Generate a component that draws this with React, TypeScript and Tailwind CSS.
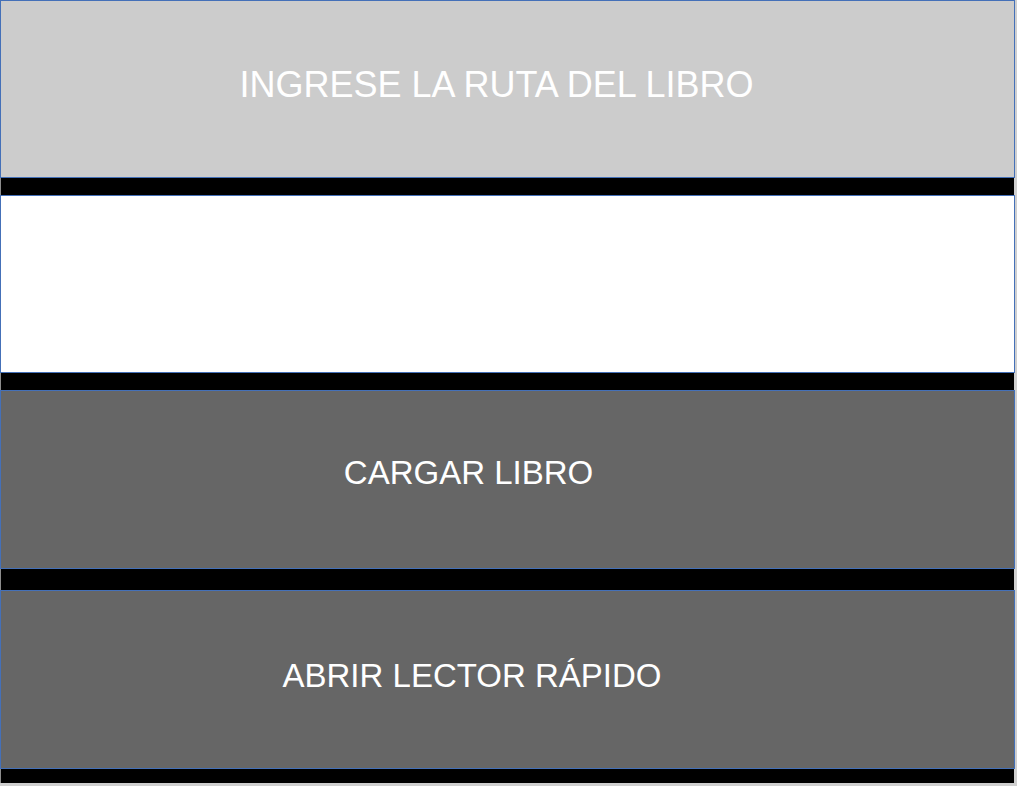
const font = { fontFamily: '"Liberation Sans", Arial, sans-serif' };

function Bar({ h }: { h: string }) {
  return <div className={`${h} w-[1014px] bg-black border-l border-[#8c8c8c]`} />;
}

export default function App() {
  return (
    <div className="w-[1017px] h-[786px] bg-[#cfcfcf] overflow-hidden" style={font}>
      <div className="w-[1015px] flex flex-col">
        <div className="h-[178px] bg-[#cccccc] border border-[#4470b8] flex items-center justify-center pr-[22px] pb-[8px]">
          <span className="text-[36px] text-white leading-none">INGRESE LA RUTA DEL LIBRO</span>
        </div>
        <Bar h="h-[17px]" />
        <div className="h-[178px] bg-white border border-[#4470b8]" />
        <Bar h="h-[17px]" />
        <button className="h-[179px] bg-[#666666] border border-[#4470b8] flex items-center justify-center pr-[78px] pb-[14px]">
          <span className="text-[33px] text-white leading-none">CARGAR LIBRO</span>
        </button>
        <Bar h="h-[21px]" />
        <button className="h-[179px] bg-[#666666] border border-[#4470b8] flex items-center justify-center pr-[71px] pb-[8px]">
          <span className="text-[33px] text-white leading-none">ABRIR LECTOR RÁPIDO</span>
        </button>
        <Bar h="h-[14px]" />
      </div>
    </div>
  );
}
